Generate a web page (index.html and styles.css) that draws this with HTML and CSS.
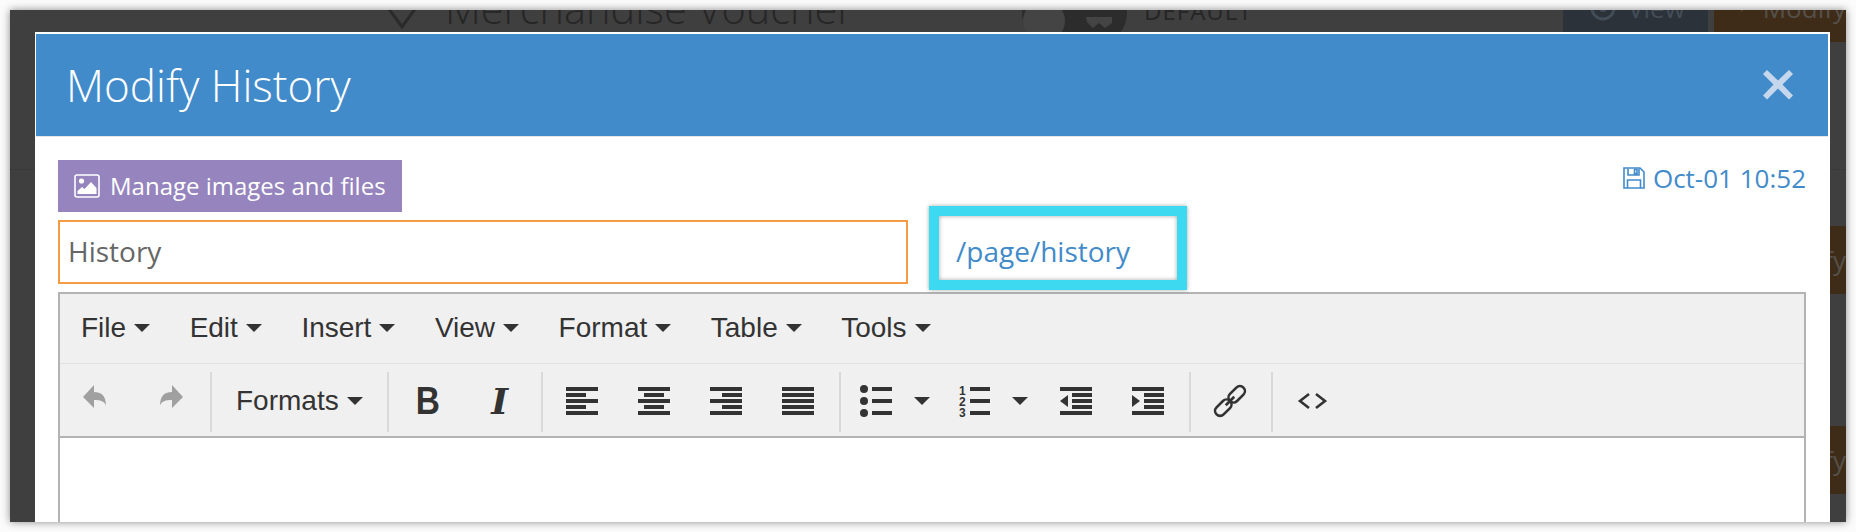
FILE: index.html
```html
<!DOCTYPE html>
<html lang="en">
<head>
<meta charset="utf-8">
<title>Modify History</title>
<link rel="stylesheet" href="styles.css">
</head>
<body>
<div class="window">
  <div class="page">
    <div class="row row-top">
      <svg class="chevron" width="38" height="20" viewBox="0 0 38 20"><path d="M1 -8L19 17L37 -8" fill="none" stroke="#2a2a2a" stroke-width="3"/></svg>
      <span class="page-title">Merchandise Voucher</span>
      <span class="toggle"><span class="knob"></span><svg class="toggle-x" width="26" height="14" viewBox="0 0 26 14"><path d="M0 0H26V6L19 11L13 6L7 11L1 5Z" fill="#444"/></svg></span>
      <span class="default-label">DEFAULT</span>
      <span class="page-btn view-btn"><svg width="26" height="26" viewBox="0 0 26 26"><circle cx="13" cy="13" r="11" fill="none" stroke="#434d57" stroke-width="3"/><circle cx="13" cy="13" r="4" fill="#434d57"/></svg>View</span>
      <span class="page-btn modify-btn"><svg width="18" height="26" viewBox="0 0 18 26"><path d="M2 25L4 18L14 6L18 10L7 22Z" fill="#5a5249"/></svg>Modify</span>
    </div>
    <div class="row row-two"><span class="page-btn modify-btn"><svg width="18" height="26" viewBox="0 0 18 26"><path d="M2 25L4 18L14 6L18 10L7 22Z" fill="#5a5249"/></svg>Modify</span></div>
    <div class="row row-three"><span class="page-btn modify-btn"><svg width="18" height="26" viewBox="0 0 18 26"><path d="M2 25L4 18L14 6L18 10L7 22Z" fill="#5a5249"/></svg>Modify</span></div>
  </div>

  <div class="modal">
    <header class="modal-header">
      <h1 class="modal-title">Modify History</h1>
      <svg class="close" width="30" height="30" viewBox="0 0 30 30" role="img" aria-label="Close"><path d="M4 0L15 10.5L26 0L30 4L19.5 14.5L30 25.5L26 29.500L15 18.500L4 29.500L0 25.500L10.500 14.500L0 4Z" fill="#c4d7ec"/></svg>
    </header>
    <div class="modal-body">
      <div class="top-row">
        <button class="manage-btn" type="button">
          <svg width="26" height="24" viewBox="0 0 26 24"><rect x="1" y="1" width="24" height="22" rx="2" fill="none" stroke="#fff" stroke-width="1.600"/><circle cx="7.500" cy="7" r="2.600" fill="#fff"/><path d="M3.500 20V17L8 13L10.500 15L17 8L22.500 14V20Z" fill="#fff"/></svg>
          <span class="manage-label">Manage images and files</span>
        </button>
        <span class="saved">
          <svg width="22" height="22" viewBox="0 0 22 22"><path d="M1 1H17L21 5V21H1Z" fill="none" stroke="#428bca" stroke-width="1.600"/><path d="M5 1.500V8H16V1.500M11.500 2.500H14V6.500H11.500ZM4.500 21V13H17.500V21" fill="none" stroke="#428bca" stroke-width="1.600"/></svg>
          Oct-01 10:52
        </span>
      </div>
      <div class="fields-row">
        <div class="title-input">History</div>
        <div class="slug"><span class="slug-inner">/page/history</span></div>
      </div>
      <div class="editor">
        <div class="menubar">
          <span class="menu-item">File<i class="caret"></i></span>
          <span class="menu-item">Edit<i class="caret"></i></span>
          <span class="menu-item">Insert<i class="caret"></i></span>
          <span class="menu-item">View<i class="caret"></i></span>
          <span class="menu-item">Format<i class="caret"></i></span>
          <span class="menu-item">Table<i class="caret"></i></span>
          <span class="menu-item">Tools<i class="caret"></i></span>
        </div>
        <div class="toolbar">
          <div class="group group-first">
            <span class="tool"><svg class="ico" viewBox="0 0 32 32"><path d="M3 12L14 0V7C21 7 26 10 26 21C25 16 20 15 14 15V23Z" fill="#a0a0a0"/></svg></span>
            <span class="tool"><svg class="ico" viewBox="0 0 32 32"><path d="M31 12L20 0V7C13 7 8 10 8 21C9 16 14 15 20 15V23Z" fill="#a0a0a0"/></svg></span>
          </div>
          <div class="group group-formats"><span class="formats">Formats<i class="caret"></i></span></div>
          <div class="group">
            <span class="tool glyph-b"><span class="glyph-b-inner">B</span></span>
            <span class="tool glyph-i">I</span>
          </div>
          <div class="group">
            <span class="tool"><svg class="ico" viewBox="0 0 32 32"><path d="M0 2h32v4H0zM0 8h20v4H0zM0 14h32v4H0zM0 20h20v4H0zM0 26h32v4H0z"/></svg></span>
            <span class="tool"><svg class="ico" viewBox="0 0 32 32"><path d="M0 2h32v4H0zM6 8h20v4H6zM0 14h32v4H0zM6 20h20v4H6zM0 26h32v4H0z"/></svg></span>
            <span class="tool"><svg class="ico" viewBox="0 0 32 32"><path d="M0 2h32v4H0zM12 8h20v4H12zM0 14h32v4H0zM12 20h20v4H12zM0 26h32v4H0z"/></svg></span>
            <span class="tool"><svg class="ico" viewBox="0 0 32 32"><path d="M0 2h32v4H0zM0 8h32v4H0zM0 14h32v4H0zM0 20h32v4H0zM0 26h32v4H0z"/></svg></span>
          </div>
          <div class="group group-lists">
            <span class="list-tool"><svg class="ico" viewBox="0 0 32 32"><circle cx="4" cy="4" r="4"/><circle cx="4" cy="16" r="4"/><circle cx="4" cy="28" r="4"/><path d="M12 2h20v4H12zM12 14h20v4H12zM12 26h20v4H12z"/></svg><i class="caret caret-list"></i></span>
            <span class="list-tool"><svg class="ico" viewBox="0 0 32 32"><text x="1" y="9.500" class="num">1</text><text x="1" y="20.500" class="num">2</text><text x="1" y="32" class="num">3</text><path d="M12 2h20v4H12zM12 14h20v4H12zM12 26h20v4H12z"/></svg><i class="caret caret-list"></i></span>
            <span class="tool"><svg class="ico" viewBox="0 0 32 32"><path d="M0 2h32v4H0zM12 8h20v4H12zM12 14h20v4H12zM12 20h20v4H12zM0 26h32v4H0zM0 16L8 10V22Z"/></svg></span>
            <span class="tool"><svg class="ico" viewBox="0 0 32 32"><path d="M0 2h32v4H0zM12 8h20v4H12zM12 14h20v4H12zM12 20h20v4H12zM0 26h32v4H0zM8 16L0 10V22Z"/></svg></span>
          </div>
          <div class="group">
            <span class="tool"><svg class="ico" viewBox="0 0 32 32"><g transform="rotate(-45 16 16)" fill="none" stroke="#333" stroke-width="2.600"><rect x="-3" y="11" width="19" height="10" rx="5"/><rect x="16" y="11" width="19" height="10" rx="5"/><path d="M10 16H22"/></g></svg></span>
          </div>
          <div class="group">
            <span class="tool"><svg class="ico" viewBox="0 0 32 32"><path d="M13 9L4 16L13 23M20 9L29 16L20 23" fill="none" stroke="#333" stroke-width="2.600"/></svg></span>
          </div>
        </div>
        <div class="editor-area"></div>
      </div>
    </div>
  </div>
</div>
</body>
</html>
```

FILE: styles.css
```css
* { box-sizing: border-box; }
html, body { margin: 0; height: 532px; overflow: hidden; }
body { padding: 10px; background: #fbfbfb; font-family: "Open Sans", sans-serif; }

.window {
  position: relative;
  width: 1836px;
  height: 512px;
  overflow: clip;
  overflow-clip-margin: 0;
  background: #3f3f3f;
  box-shadow: 0 0 8px rgba(0,0,0,.45);
}

/* dimmed page behind the dialog */
.page { display: flex; flex-direction: column; color: #262626; }
.row { display: flex; justify-content: flex-end; }
.row-top { height: 160px; border-bottom: 1px dotted #333; align-items: flex-start; justify-content: flex-start; }
.row-two { padding-top: 56px; }
.row-three { margin-top: 132px; }
.chevron { margin: 0 0 0 373px; flex: none; }
.page-title { flex: none; width: 405px; margin: -32px 0 0 24px; font-size: 41.500px; font-weight: 300; line-height: 60px; white-space: nowrap; }
.toggle {
  display: flex; align-items: flex-end; justify-content: space-between;
  width: 105px; height: 56px; margin: -24px 0 0 172px;
  border-radius: 28px; background: #2c2c2c; flex: none;
}
.knob { width: 42px; height: 42px; margin: 0 0 0 1px; border-radius: 50%; background: #444; }
.toggle-x { margin: 0 15px 11px 0; }
.default-label { margin: -17px 0 0 17px; font-size: 24px; line-height: 36px; color: #252525; letter-spacing: 1px; white-space: nowrap; }
.page-btn {
  display: flex; align-items: center; gap: 12px; flex: none;
  height: 68px; font-size: 26px; white-space: nowrap; overflow: hidden;
}
.view-btn { width: 145px; margin: -36px 6px 0 auto; padding-left: 27px; background: #2b323a; color: #434d57; }
.modify-btn { width: 132px; padding-left: 26px; gap: 17px; background: #3e2c18; color: #55504a; }
.row-top .modify-btn { margin-top: -36px; }

/* dialog */
.modal {
  position: absolute; left: 25px; top: 22px;
  width: 1795px; height: 520px;
  border-top: 2px solid #fff;
  background: #fff;
}
.modal-header {
  display: flex; align-items: center; justify-content: space-between;
  height: 103px; margin: 0 2px 0 1px; padding: 0 35px 0 30px;
  background: #428bca; border-bottom: 1px solid #e5e5e5;
}
.modal-title { margin: 0; font-size: 44px; font-weight: 300; color: #fff; line-height: 54px; }
.close { flex: none; }
.modal-body { padding: 23px 24px 0 23px; }
.top-row { display: flex; justify-content: space-between; height: 52px; }
.manage-btn {
  display: flex; align-items: center; gap: 10px;
  width: 344px; height: 52px; padding: 0 0 0 16px;
  border: 0; background: #9584bd; color: #fff;
  font: 24px "Open Sans", sans-serif;
}
.manage-label { padding-bottom: 2px; }
.saved { display: flex; align-items: center; gap: 8px; height: 34px; margin-top: 1px; font-size: 26px; color: #428bca; }
.fields-row { display: flex; height: 64px; margin-top: 8px; align-items: flex-start; }
.title-input {
  width: 850px; height: 64px; padding: 0 0 0 8px;
  border: 2px solid #f59b42; color: #666;
  font-size: 28px; line-height: 58px;
}
.slug {
  width: 258px; height: 84px; margin: -14px 0 0 21px;
  border: 10px solid #3dd9f0;
  box-shadow: 0 0 4px rgba(0,0,0,.35), inset 0 0 4px rgba(0,0,0,.35);
  background: #fff; flex: none;
}
.slug-inner { display: block; padding: 15px 0 0 17px; font-size: 28px; line-height: 40px; color: #428bca; }

.editor { height: 260px; margin-top: 8px; border: 2px solid #b3b3b3; font-family: "Liberation Sans", Arial, sans-serif; color: #333; }
.menubar { display: flex; height: 70px; padding: 0 0 2px 21px; align-items: center; background: #f0f0f0; border-bottom: 1px solid #e2e2e2; }
.menu-item { display: flex; align-items: center; margin-right: 39.500px; font-size: 28px; }
.caret { display: block; width: 0; height: 0; margin-left: 8px; border: 8px solid transparent; border-top-color: #333; border-bottom: 0; }
.toolbar { display: flex; height: 74px; padding-top: 8px; padding-bottom: 4px; background: #f0f0f0; border-bottom: 2px solid #b3b3b3; }
.group { display: flex; align-items: center; height: 60px; padding: 0 5px 0 3px; border-left: 2px solid #d9d9d9; }
.group-first { padding: 0 6px 0 0; border-left: 0; }
.group-formats { padding: 0 24px 0 24px; }
.formats { display: flex; align-items: center; padding-bottom: 2px; font-size: 28px; }
.tool { display: flex; align-items: center; justify-content: center; width: 72px; height: 60px; padding-bottom: 2px; }
.list-tool { display: flex; align-items: center; width: 98px; height: 60px; padding: 0 0 2px 16px; }
.caret-list { margin-left: 22px; }
.ico { display: block; width: 32px; height: 32px; fill: #333; flex: none; overflow: visible; }
.num { font: bold 12px "Liberation Sans", sans-serif; }
.glyph-b { font: bold 38px "Liberation Sans", sans-serif; }
.glyph-b-inner { display: block; transform: scaleX(.88); }
.glyph-i { font: italic bold 36px "DejaVu Serif", serif; }
.editor-area { height: 100px; background: #fff; }
```
